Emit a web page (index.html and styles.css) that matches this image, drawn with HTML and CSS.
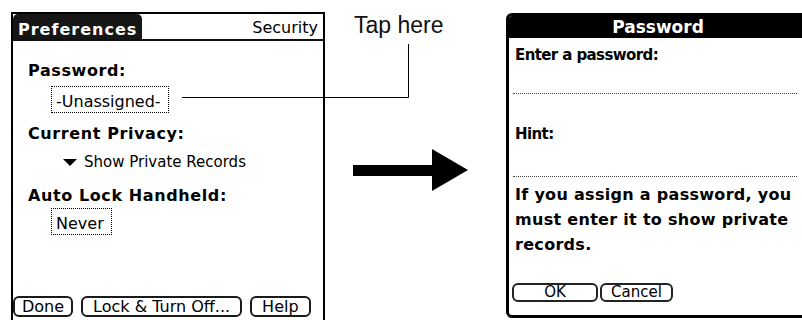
FILE: index.html
```html
<!DOCTYPE html>
<html lang="en">
<head>
  <meta charset="UTF-8" />
  <meta name="viewport" content="width=device-width, initial-scale=1.0"/>
  <title>Security Preferences</title>
  <link rel="stylesheet" href="styles.css">
</head>
<body>
  <div class="page">

    <section class="screen">
      <header class="titlebar">
        <span class="tab">Preferences</span>
        <span class="screen-name">Security</span>
      </header>

      <div class="form">
        <div class="label">Password:</div>
        <div class="selector selector-password">-Unassigned-</div>

        <div class="label label-privacy">Current Privacy:</div>
        <div class="popup"><span class="popup-arrow"></span>Show Private Records</div>

        <div class="label label-lock">Auto Lock Handheld:</div>
        <div class="selector selector-lock">Never</div>
      </div>

      <div class="buttons">
        <button class="btn btn-done">Done</button>
        <button class="btn">Lock &amp; Turn Off...</button>
        <button class="btn">Help</button>
      </div>
    </section>

    <div class="middle">
      <div class="callout">Tap here</div>
      <svg class="arrow" width="115" height="42" viewBox="0 0 115 42">
        <rect x="0" y="16" width="80" height="11" fill="#000"/>
        <polygon points="79,0 115,21 79,42" fill="#000"/>
      </svg>
    </div>

    <section class="dialog">
      <header class="dialog-title">Password</header>
      <div class="dialog-body">
        <div class="dlabel">Enter a password:</div>
        <div class="entry entry-password"></div>

        <div class="dlabel dlabel-hint">Hint:</div>
        <div class="entry entry-hint"></div>

        <p class="note">If you assign a password, you<br>must enter it to show private<br>records.</p>

        <div class="dialog-buttons">
          <button class="dbtn dbtn-ok">OK</button>
          <button class="dbtn">Cancel</button>
        </div>
      </div>
    </section>

    <!-- callout leader from the selector to the label -->
    <svg class="leader" width="802" height="320">
      <path d="M182 97.5 H408.5 V44" fill="none" stroke="#000" stroke-width="1"/>
    </svg>
  </div>
</body>
</html>
```

FILE: styles.css
```css
html, body {
  margin: 0;
  width: 802px;
  height: 320px;
  overflow: hidden;
  background: #ffffff;
}

body {
  font-family: "DejaVu Sans", sans-serif;
  color: #000000;
}

.page {
  position: relative;
  display: flex;
  align-items: flex-start;
  width: 802px;
  height: 320px;
  padding: 12px 0 0 11px;
  box-sizing: border-box;
  overflow: hidden;
}

/* left handheld screen */

.screen {
  flex: none;
  width: 314px;
  height: 308px;
  border: 2px solid #000;
  border-bottom: 0;
  box-sizing: border-box;
}

.titlebar {
  display: flex;
  justify-content: space-between;
  align-items: flex-end;
  height: 27px;
  box-sizing: border-box;
  border-bottom: 2px solid #111;
}

.tab {
  height: 25px;
  box-sizing: border-box;
  padding: 6px 5px 0 5px;
  line-height: 19px;
  background: #161616;
  color: #ffffff;
  font-weight: bold;
  font-size: 16px;
  letter-spacing: 1px;
  border-radius: 5px 5px 0 0;
}

.screen-name {
  font-size: 16px;
  line-height: 19px;
  padding-bottom: 2px;
  margin-right: 5px;
}

.form {
  padding: 20px 0 0 15px;
}

.label {
  font-weight: bold;
  font-size: 16px;
  line-height: 20px;
  letter-spacing: 0.6px;
}

.label-privacy {
  margin-top: 11px;
}

.label-lock {
  margin-top: 14px;
}

.selector {
  display: inline-block;
  margin-left: 23px;
  padding: 4px 7px 0 4px;
  font-size: 16px;
  line-height: 21px;
  border: 1px dotted #000;
  vertical-align: top;
}

.selector-password {
  margin-top: 5px;
}

.selector-lock {
  margin-top: 2px;
}

.popup {
  display: flex;
  align-items: center;
  margin: 8px 0 0 35px;
  font-size: 15px;
  line-height: 20px;
}

.popup-arrow {
  width: 0;
  height: 0;
  margin: 0 7px 0 0;
  border-left: 7.5px solid transparent;
  border-right: 7.5px solid transparent;
  border-top: 7px solid #000;
}

.buttons {
  display: flex;
  gap: 8px;
  margin-top: 61px;
}

.btn {
  height: 21px;
  padding: 0 10px;
  font-family: "DejaVu Sans", sans-serif;
  font-size: 16px;
  line-height: 17px;
  color: #000;
  background: #fff;
  border: 2px solid #1a1a1a;
  border-radius: 6px;
}

.btn-done {
  padding: 0 7px;
}

/* annotation between the screens */

.middle {
  flex: none;
  width: 181px;
  display: flex;
  flex-direction: column;
  align-items: flex-start;
}

.callout {
  margin-left: 29px;
  font-family: "Liberation Sans", Arial, sans-serif;
  font-size: 23px;
  line-height: 26px;
  color: #111;
}

.arrow {
  display: block;
  margin: 111px 0 0 28px;
}

.leader {
  position: absolute;
  top: 0;
  left: 0;
  pointer-events: none;
}

/* password dialog */

.dialog {
  flex: none;
  width: 304px;
  height: 305px;
  margin-top: 1px;
  border: 3px solid #000;
  border-radius: 6px;
  box-sizing: border-box;
  overflow: hidden;
}

.dialog-title {
  height: 22px;
  background: #000;
  color: #fff;
  text-align: center;
  font-weight: bold;
  font-size: 17px;
  line-height: 22px;
}

.dialog-body {
  padding: 7px 0 0 6px;
}

.dlabel {
  font-weight: bold;
  font-size: 15px;
  line-height: 20px;
  letter-spacing: -0.6px;
}

.dlabel-hint {
  margin-top: 30px;
}

.entry {
  width: 284px;
  margin-left: -2px;
  border-bottom: 1px dotted #444;
}

.entry-password {
  height: 28px;
}

.entry-hint {
  height: 32px;
}

.note {
  margin: 5px 0 0 0;
  font-weight: bold;
  font-size: 16px;
  line-height: 25px;
  letter-spacing: 0.3px;
  white-space: nowrap;
}

.dialog-buttons {
  display: flex;
  gap: 2px;
  margin: 26px 0 0 -3px;
}

.dbtn {
  height: 19px;
  padding: 0 9px;
  font-family: "DejaVu Sans", sans-serif;
  font-size: 15px;
  line-height: 15px;
  color: #000;
  background: #fff;
  border: 2px solid #222;
  border-radius: 6px;
}

.dbtn-ok {
  width: 86px;
}
```
